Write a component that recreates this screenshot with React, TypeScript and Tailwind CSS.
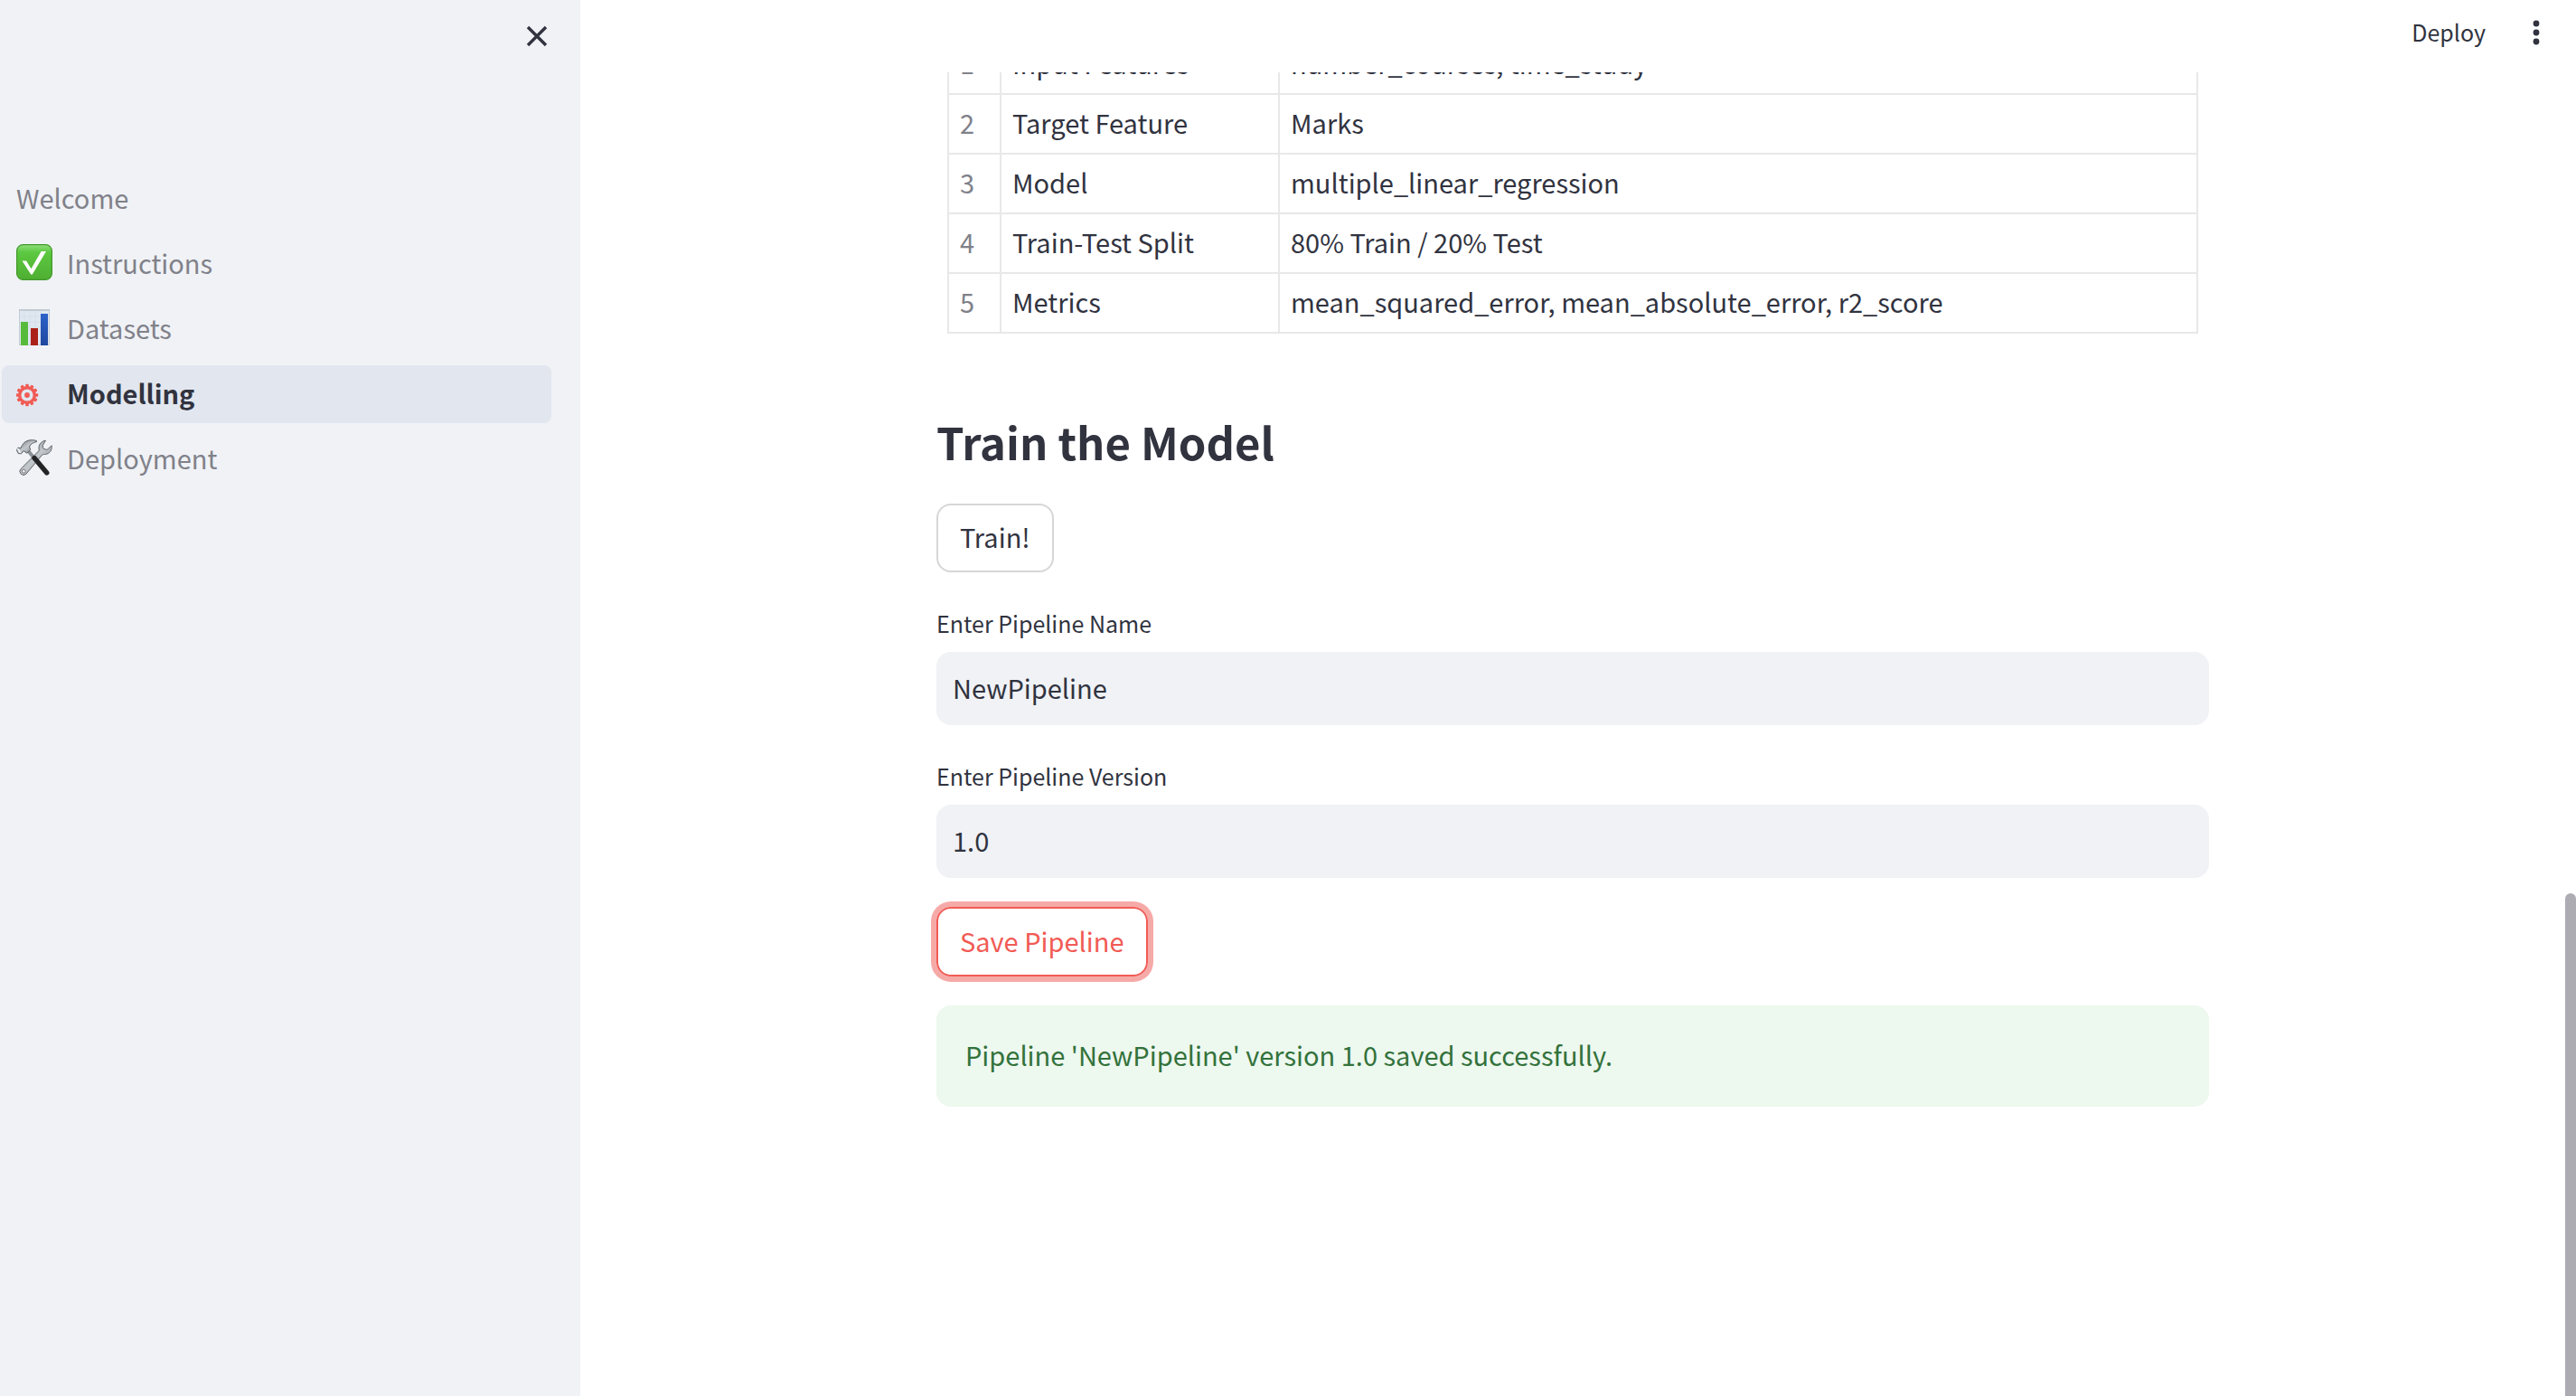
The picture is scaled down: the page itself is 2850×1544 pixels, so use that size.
import type { ReactNode } from 'react'

function CheckIcon() {
  return (
    <svg viewBox="0 0 40 40" className="h-10 w-10" aria-hidden="true">
      <defs>
        <linearGradient id="check-fill" x1="0" y1="0" x2="0" y2="1">
          <stop offset="0" stopColor="#8fe07c" />
          <stop offset="0.22" stopColor="#5cc840" />
          <stop offset="1" stopColor="#4fae32" />
        </linearGradient>
      </defs>
      <rect x="0.6" y="0.6" width="38.8" height="38.8" rx="7" fill="url(#check-fill)" stroke="#41982a" strokeWidth="1.2" />
      <path d="M6.5 18.6h4.6l5.4 8.6L27.6 8h5.4L17.8 33.4h-1.6z" fill="#fff" />
    </svg>
  )
}

function ChartIcon() {
  return (
    <svg viewBox="0 0 40 40" className="h-10 w-10" aria-hidden="true">
      <defs>
        <linearGradient id="bar-blue" x1="0" y1="0" x2="0" y2="1">
          <stop offset="0" stopColor="#2c62c9" />
          <stop offset="1" stopColor="#1f479f" />
        </linearGradient>
      </defs>
      <rect x="3.5" y="0.5" width="33" height="39" fill="#dfe7f0" stroke="#c3ccd4" />
      <path d="M3 1h34" stroke="#bcc6ce" strokeWidth="1.4" />
      <path d="M9 2v37M15 2v37M21 2v37M27 2v37M4 8h32M4 14h32M4 20h32" stroke="#d3deea" strokeWidth="0.8" />
      <rect x="5" y="14" width="8" height="26" fill="#56bb3a" />
      <rect x="16" y="21" width="8" height="19" fill="#ab2118" />
      <rect x="27" y="5" width="8" height="35" fill="url(#bar-blue)" />
    </svg>
  )
}

function GearIcon() {
  const teeth = [0, 30, 60, 90, 120, 150, 180, 210, 240, 270, 300, 330]
  return (
    <svg viewBox="0 -11 40 40" className="h-10 w-10" aria-hidden="true">
      <circle cx="12" cy="12" r="8.3" fill="none" stroke="#f15b55" strokeWidth="3.4" />
      {teeth.map((a) => (
        <rect key={a} x="10.2" y="-0.2" width="3.6" height="4" rx="1" fill="#f15b55" transform={`rotate(${a} 12 12)`} />
      ))}
      <circle cx="12" cy="12" r="2.9" fill="#f15b55" />
    </svg>
  )
}

function ToolsIcon() {
  return (
    <svg viewBox="0 0 40 40" className="h-10 w-10" aria-hidden="true">
      <defs>
        <linearGradient id="steel" x1="0" y1="0" x2="1" y2="1">
          <stop offset="0" stopColor="#6d7278" />
          <stop offset="0.5" stopColor="#c3c8cd" />
          <stop offset="1" stopColor="#747a81" />
        </linearGradient>
      </defs>
      <path
        d="M32.5 1.2c-4 .5-7.400 3.600-7.500 7.800 0 1.500.4 2.600 0 3.600L5.200 32.400a4 4 0 0 0 5.700 5.800L28.600 17.200c1-.8 2.600-.6 4-.8 4.200-.6 7-4 6.600-9.600l-5.200 4.600-4-1-.8-3.600z"
        fill="url(#steel)"
        stroke="#62676d"
        strokeWidth="1"
      />
      <circle cx="8.300" cy="35.200" r="1.900" fill="#eef0f4" stroke="#555" strokeWidth="0.7" />
      <path d="M13 12.500L21 22" stroke="#8b9097" strokeWidth="4" />
      <path d="M20 20.500L33.800 37" stroke="#232425" strokeWidth="5.400" strokeLinecap="round" />
      <path
        d="M22.500 1.500C16-.4 9.500 1 6.500 6.500L5 9.600 1.800 9.200.5 12l1.800 3.600 3.200.2 2.600-3.200 3.600 2.600 4-3.800-1.200-3.400c1.400-2.800 4-4.600 8-5.400z"
        fill="url(#steel)"
        stroke="#595e64"
        strokeWidth="1"
      />
      <path d="M1.800 10.600l2.400 3.600" stroke="#f4f6f8" strokeWidth="1.800" strokeLinecap="round" />
    </svg>
  )
}

const nav: { label: string; icon?: ReactNode; active?: boolean }[] = [
  { label: 'Welcome' },
  { label: 'Instructions', icon: <CheckIcon /> },
  { label: 'Datasets', icon: <ChartIcon /> },
  { label: 'Modelling', icon: <GearIcon />, active: true },
  { label: 'Deployment', icon: <ToolsIcon /> },
]

const rows = [
  ['1', 'Input Features', 'number_courses, time_study'],
  ['2', 'Target Feature', 'Marks'],
  ['3', 'Model', 'multiple_linear_regression'],
  ['4', 'Train-Test Split', '80% Train / 20% Test'],
  ['5', 'Metrics', 'mean_squared_error, mean_absolute_error, r2_score'],
]

function Field({ id, label, value }: { id: string; label: string; value: string }) {
  return (
    <div className="flex flex-col">
      <label htmlFor={id} className="mb-4 text-[25px] leading-8">
        {label}
      </label>
      <input id={id} defaultValue={value} className="h-[81px] w-full rounded-2xl bg-[#f0f2f6] px-[18px] pb-1 outline-none" />
    </div>
  )
}

export default function App() {
  return (
    <div className="flex h-screen overflow-hidden bg-white font-['Noto_Sans_CJK_SC',sans-serif] text-[29px] leading-[48px] text-[#31333f]">
      <aside className="flex w-[642px] shrink-0 flex-col bg-[#f0f2f6]">
        <div className="flex h-[188px] items-start justify-end pt-5 pr-7">
          <button type="button" aria-label="Close sidebar" className="flex h-10 w-10 items-center justify-center">
            <svg viewBox="0 0 24 24" className="h-6 w-6" aria-hidden="true">
              <path d="M2 2l20 20M22 2L2 22" stroke="#31333f" strokeWidth="3.400" />
            </svg>
          </button>
        </div>
        <nav className="flex flex-col gap-2 pr-8 pl-[2px]">
          {nav.map((item) => (
            <a
              key={item.label}
              href="#"
              className={
                item.active
                  ? 'flex h-16 items-center gap-4 rounded-lg bg-[#e2e6ee] pb-1 pl-4 font-bold'
                  : 'flex h-16 items-center gap-4 rounded-lg pb-1 pl-4 text-[#808189]'
              }
            >
              {item.icon && <span className="flex w-10 shrink-0">{item.icon}</span>}
              {item.label}
            </a>
          ))}
        </nav>
      </aside>

      <div className="flex min-w-0 flex-1 flex-col">
        <header className="flex h-20 shrink-0 items-start justify-end gap-9 pt-4 pr-6">
          <button type="button" className="text-[25px] leading-[38px]">
            Deploy
          </button>
          <button type="button" aria-label="Main menu" className="flex h-10 w-10 items-center justify-center">
            <svg viewBox="0 0 40 40" className="h-10 w-10" aria-hidden="true">
              <g fill="#31333f">
                <circle cx="20" cy="10" r="3.400" />
                <circle cx="20" cy="20" r="3.400" />
                <circle cx="20" cy="30" r="3.400" />
              </g>
            </svg>
          </button>
        </header>

        <div className="flex min-h-0 flex-1">
          <main className="flex min-w-0 flex-1 flex-col items-center overflow-hidden">
            <div className="flex w-full max-w-[1408px] flex-col">
              <div className="-mt-[41px] pr-3 pl-3">
                <table className="w-full table-fixed border-separate border-spacing-0 border-l-2 border-[#e8e8e9]">
                  <colgroup>
                    <col className="w-[58px]" />
                    <col className="w-[308px]" />
                    <col />
                  </colgroup>
                  <tbody>
                    {rows.map(([n, name, value]) => (
                      <tr key={n} className="h-[66px]">
                        <th scope="row" className="border-r-2 border-b-2 border-[#e8e8e9] pt-1 pb-2 pl-3 text-left font-normal text-[#808189]">
                          {n}
                        </th>
                        <td className="border-r-2 border-b-2 border-[#e8e8e9] px-3 pt-1 pb-2">{name}</td>
                        <td className="border-r-2 border-b-2 border-[#e8e8e9] px-3 pt-1 pb-2">{value}</td>
                      </tr>
                    ))}
                  </tbody>
                </table>
              </div>

              <h2 className="mt-[85px] mb-[35px] text-[49px] leading-[68px] font-bold">Train the Model</h2>

              <button type="button" className="h-[76px] self-start rounded-2xl border-2 border-[#d6d6d8] px-6 pb-1">
                Train!
              </button>

              <div className="mt-10 flex flex-col gap-10">
                <Field id="pipeline-name" label="Enter Pipeline Name" value="NewPipeline" />
                <Field id="pipeline-version" label="Enter Pipeline Version" value="1.0" />
              </div>

              <button
                type="button"
                className="mt-8 h-[77px] self-start rounded-2xl border-2 border-[#f15b55] px-6 pb-1 text-[#f15b55] ring-6 ring-[#f6aaa8]"
              >
                Save Pipeline
              </button>

              <div role="status" className="mt-8 rounded-2xl bg-[#edf8ef] px-8 pt-[30px] pb-[34px] text-[#33723b]">
                Pipeline 'NewPipeline' version 1.0 saved successfully.
              </div>
            </div>
          </main>
          <div className="flex w-3 shrink-0 flex-col justify-end">
            <div className="h-[38%] rounded-t-full bg-[#adacb2]" />
          </div>
        </div>
      </div>
    </div>
  )
}
